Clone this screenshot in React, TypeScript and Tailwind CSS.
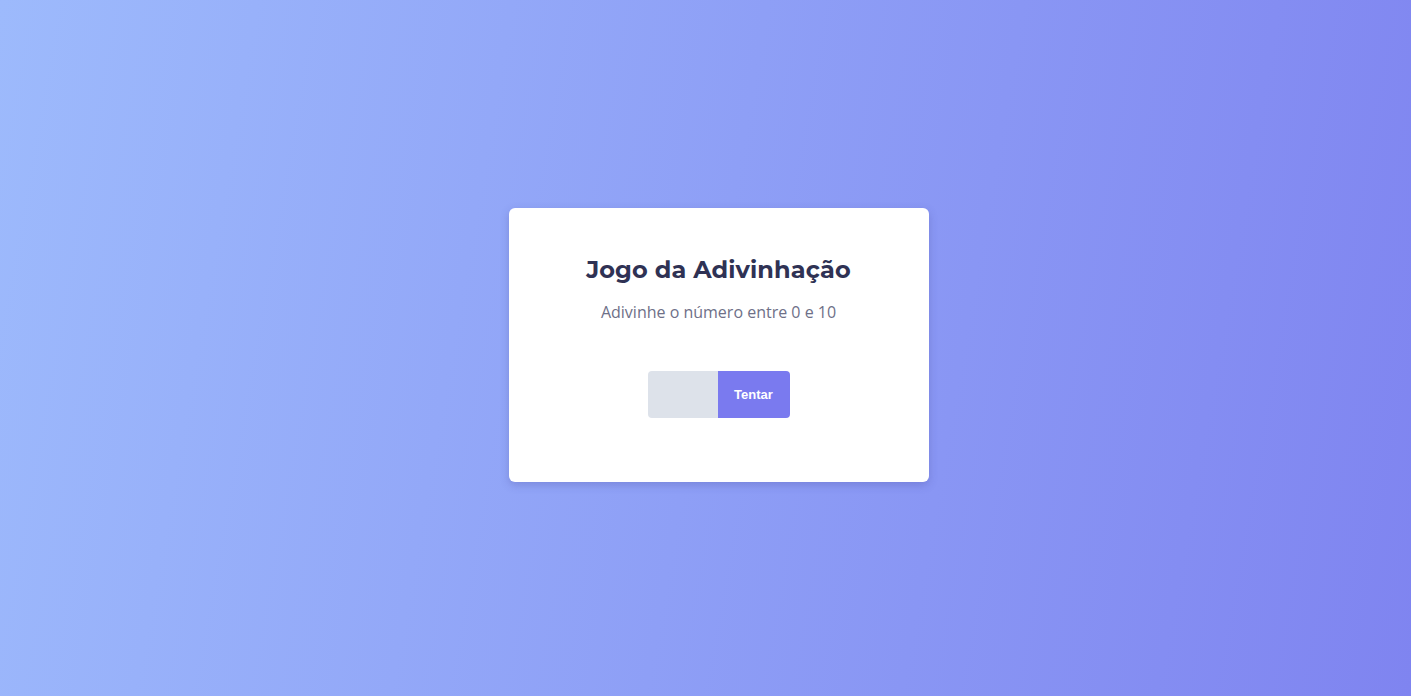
import React, { useState } from 'react';

export default function App() {
  const [guess, setGuess] = useState('');

  return (
    <div className="min-h-screen w-full flex items-center justify-center pl-[26px] pb-[6px] bg-[linear-gradient(100deg,#9dbafc,#7f84f0)]">
      <div className="w-[420px] h-[274px] bg-white rounded-md shadow-[0_3px_8px_rgba(60,60,140,0.25)] flex flex-col items-center pt-[47px]">
        <h1 className="text-[24px] leading-[30px] font-bold text-[#2f3254] font-['Montserrat','Inter',sans-serif] tracking-[0.1px]">
          Jogo da Adivinhação
        </h1>
        <p className="mt-[16px] text-[16px] leading-[22px] text-[#6e7088] font-['Open_Sans',sans-serif]">
          Adivinhe o número entre 0 e 10
        </p>
        <div className="mt-[48px] flex">
          <input
            type="text"
            value={guess}
            onChange={(e) => setGuess(e.target.value)}
            className="w-[70px] h-[47px] bg-[#dde2ea] rounded-l-[4px] outline-none px-2 text-[#2f3254]"
          />
          <button className="w-[72px] h-[47px] bg-[#7a7aef] text-white rounded-r-[4px] text-[13px] font-bold font-['Liberation_Sans',Arial,sans-serif]">
            Tentar
          </button>
        </div>
      </div>
    </div>
  );
}
